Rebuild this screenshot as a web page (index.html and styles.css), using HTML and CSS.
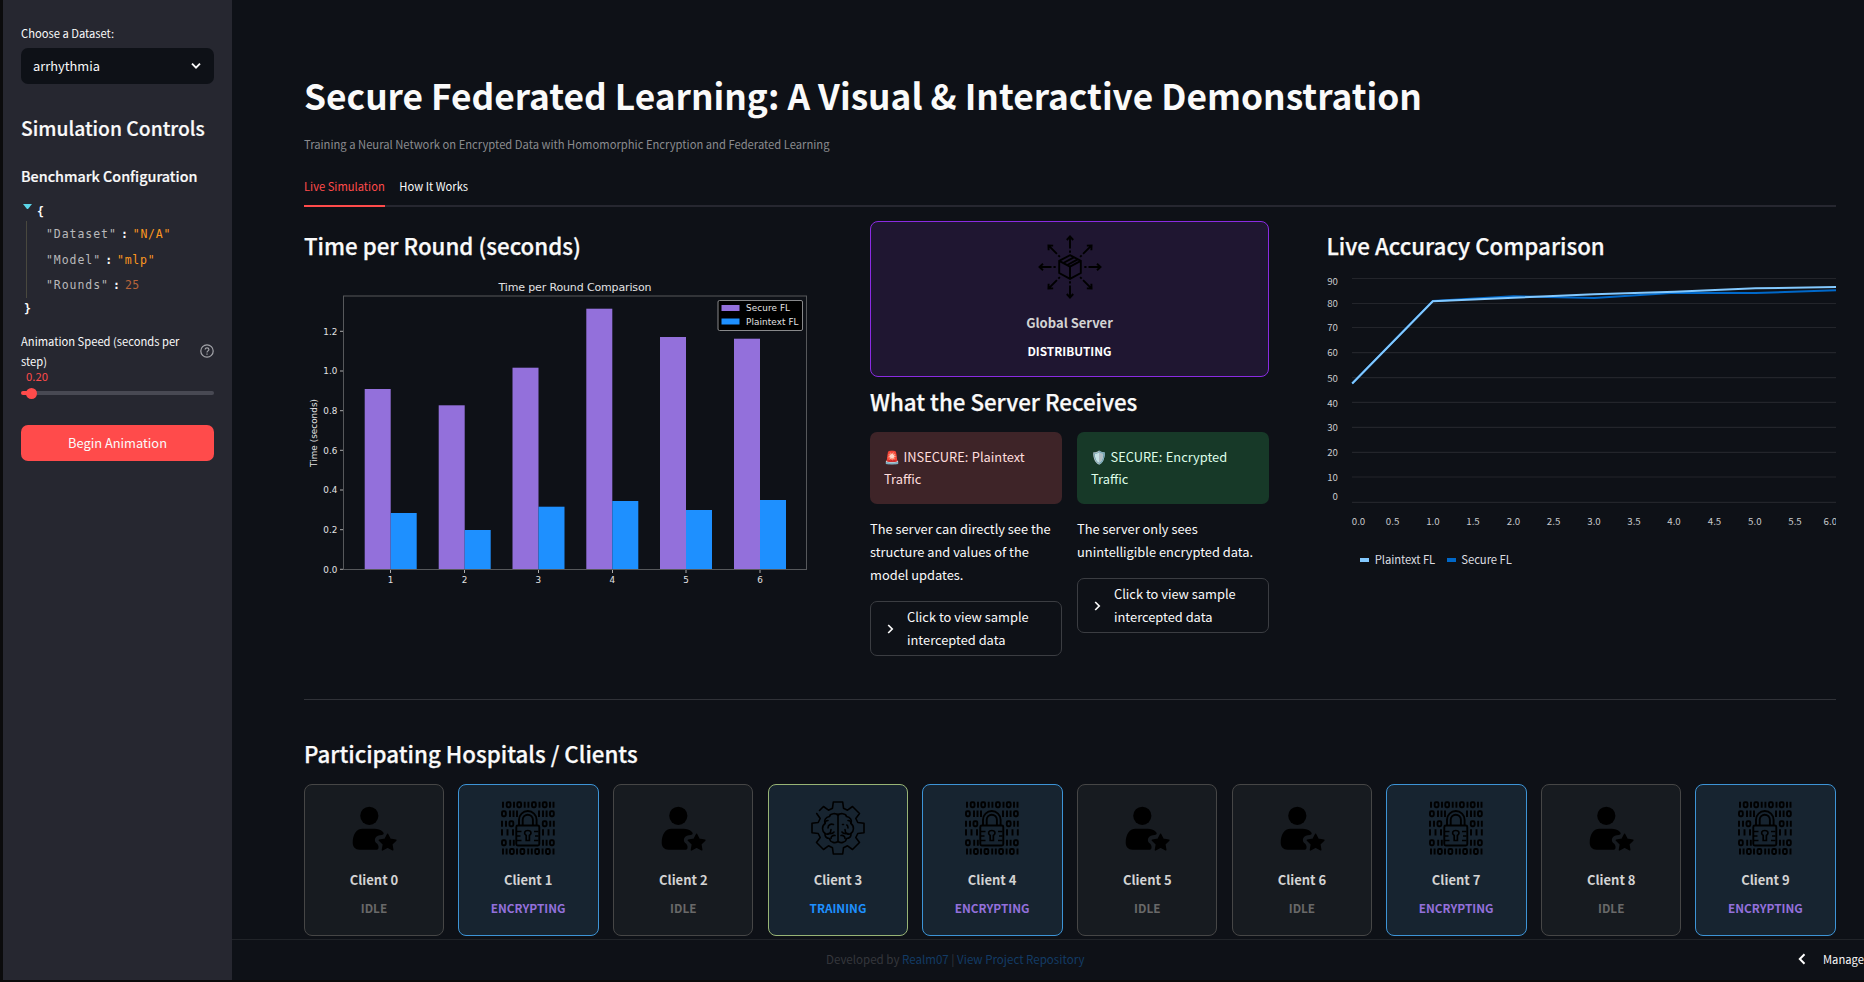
FILE: index.html
```html
<!DOCTYPE html>
<html lang="en">
<head>
<meta charset="utf-8">
<title>Secure Federated Learning</title>
<link rel="stylesheet" href="styles.css">
</head>
<body>
<svg class="defs" width="0" height="0">
  <symbol id="user" viewBox="0 0 54 54">
    <circle cx="22.3" cy="14.8" r="9.1"/>
    <path d="M15.5 27.8h12c3.500 0 6 .8 8 2.600 2 1.700 1.300 3.200-.6 3.500-2.800.4-5.700.8-6.700 3.300-1 2.600.2 4 2 5.600 1.400 1.400 1.700 3.300 1 5.200-.3.600-.9.800-1.500.8H12.500c-4.200 0-6.800-3-6.800-7 0-8 3.500-14 9.800-14z"/>
    <path stroke="#000" stroke-width="1.400" stroke-linejoin="round" d="M40.600 33.200l2.600 5.100 5.700.9-4.100 4 1 5.700-5.200-2.700-5.200 2.700 1-5.700-4.100-4 5.700-.9z"/>
  </symbol>
  <symbol id="lock" viewBox="0 0 54 54">
    <g fill="none" stroke="#000" stroke-width="1.900">
      <path d="M2 .7v6M13 .7v6M23.700 .7v6M27.400 .7v6M38.500 .7v6M49 .7v6M52.500 .7v6M9 9.500v6.500M12.500 9.500v6.500M16 9.500v6.500M38 9.500v6.500M42 9.500v6.500M45.600 9.500v6.500M1 19.700v6M5 19.700v6M49.200 19.700v6M52.800 19.700v6M1 28.200v6.300M6.500 28.200v6.300M12 28.200v6.300M42 28.200v6.300M47.500 28.200v6.300M52.800 28.200v6.300M9.200 38.700v6M12.800 38.700v6M42 38.700v6M45.600 38.700v6M2 47.500v6M5.600 47.500v6M16 47.500v6M27.200 47.500v6M30.800 47.500v6M41.600 47.500v6M52.500 47.500v6"/>
      <g>
        <rect x="5.700" y="1.300" width="3.800" height="5" rx="1.200"/><rect x="16.300" y="1.300" width="3.800" height="5" rx="1.200"/><rect x="31" y="1.300" width="3.800" height="5" rx="1.200"/><rect x="41.800" y="1.300" width="3.800" height="5" rx="1.200"/>
        <rect x="1" y="10.200" width="3.800" height="5" rx="1.200"/><rect x="49" y="10.200" width="3.800" height="5" rx="1.200"/>
        <rect x="8.500" y="20.200" width="3.800" height="5" rx="1.200"/><rect x="41.800" y="20.200" width="3.800" height="5" rx="1.200"/>
        <rect x="1" y="39.200" width="3.800" height="5" rx="1.200"/><rect x="49" y="39.200" width="3.800" height="5" rx="1.200"/>
        <rect x="9" y="48" width="3.800" height="5" rx="1.200"/><rect x="19.500" y="48" width="3.800" height="5" rx="1.200"/><rect x="34.200" y="48" width="3.800" height="5" rx="1.200"/><rect x="45" y="48" width="3.800" height="5" rx="1.200"/>
      </g>
      <rect x="15.300" y="24.500" width="23" height="20" rx="1.500"/>
      <path d="M18 24v-5.200a8.800 8.800 0 0 1 17.600 0V24M21.700 24v-5.200a5.100 5.100 0 0 1 10.200 0V24"/>
      <path stroke-width="1.500" d="M16 30.500h4.500M16 35h3.500M16 39.500h4.500M37.500 30.500H33M37.500 35H34M37.500 39.500H33"/>
      <path stroke-width="1.700" d="M25.200 34.500c-3-2.300-1.500-5 1.600-5s4.600 2.700 1.600 5v5h-3.200z"/>
    </g>
  </symbol>
  <symbol id="brain" viewBox="0 0 54 54">
    <g fill="none" stroke="#000" stroke-width="1.600" stroke-linejoin="round" stroke-linecap="round">
      <path d="M8.500 9.500L12.500 5.500 17.500 9.200 21.500 7.200 22.300 1H31.700L32.500 7.200 36.500 9.200 41.500 5.500 48.500 12.500 44.800 17.500 46.800 21.500 53 22.300V31.700L46.800 32.500 44.800 36.500 48.500 41.500 41.500 48.500 36.500 44.800 32.500 46.800 31.700 53H22.300L21.500 46.800 17.500 44.800 12.500 48.500 5.500 41.500 9.200 36.500 7.200 32.500 1 31.700V22.300L7.200 21.500 9.200 17.500 5.700 12.500"/>
      <path d="M27 13v28M27 14.500c-2-3-8-2-8.500 1-4 .5-5.800 4-4.500 7-3.500 2.500-3 8 0 10-.3 3 1.500 5 4.500 5 .5 4 6.500 5.500 8.500 2.500M27 14.500c2-3 8-2 8.500 1 4 .5 5.800 4 4.500 7 3.500 2.500 3 8 0 10 .3 3-1.500 5-4.500 5-.5 4-6.500 5.500-8.500 2.500"/>
      <path d="M14 22.500c0-2 1-3 3-3M17 27c0-3 2.500-4.500 5.500-3.500M14 32.500c2.500 1.500 6 .5 6-4M17 32.500c3 .5 5 .2 6-1.500M20 37.500c0-2 1.500-3.500 4-3M40 22.500c0-2-1-3-3-3M37 27c0-2-.7-2.700-1.200-3M31.500 23.500h1M40 32.500c-2.500 1.500-6 .5-6-4M37 32.500c-3 .5-5 .2-6-1.500M34 37.500c0-2-1.500-3.500-4-3"/>
    </g>
  </symbol>
</svg>

<aside class="sidebar">
  <label class="label">Choose a Dataset:</label>
  <div class="select"><span>arrhythmia</span>
    <svg width="12" height="8" viewBox="0 0 12 8"><path d="M2 1.600l4 4 4-4" fill="none" stroke="#fafafa" stroke-width="1.900"/></svg>
  </div>
  <h2 class="side-title">Simulation Controls</h2>
  <h3 class="side-sub">Benchmark Configuration</h3>
  <div class="json">
    <div class="json-open"><i class="tri"></i><b>{</b></div>
    <div class="json-body">
      <div><span class="key">"Dataset"</span><b>:</b><span class="str">"N/A"</span></div>
      <div><span class="key">"Model"</span><b>:</b><span class="str">"mlp"</span></div>
      <div><span class="key">"Rounds"</span><b>:</b><span class="num">25</span></div>
    </div>
    <div class="json-close"><b>}</b></div>
  </div>
  <div class="speed"><span class="label">Animation Speed (seconds per step)</span>
    <svg width="14" height="14" viewBox="0 0 14 14" fill="none" stroke="#a3a4a9" stroke-width="1.200"><circle cx="7" cy="7" r="6.200"/><path d="M5.100 5.500c.1-2.300 3.800-2.300 3.800 0 0 1.400-1.900 1.400-1.900 2.900M7 9.400v1.300"/></svg>
  </div>
  <div class="value">0.20</div>
  <div class="track"><i class="thumb"></i></div>
  <button class="begin">Begin Animation</button>
</aside>

<div class="page">
<main class="main">
  <h1>Secure Federated Learning: A Visual &amp; Interactive Demonstration</h1>
  <p class="caption">Training a Neural Network on Encrypted Data with Homomorphic Encryption and Federated Learning</p>
  <nav class="tabs"><a class="tab active">Live Simulation</a><a class="tab">How It Works</a></nav>

  <section class="columns">
    <div class="col-time">
      <h2 class="heading">Time per Round (seconds)</h2>
      <svg class="bars" width="512" height="330" viewBox="304 272 512 330">
        <text x="575" y="290.500" text-anchor="middle" font-size="11" textLength="153">Time per Round Comparison</text>
        <g fill="#9370db">
          <rect x="364.700" y="389" width="26" height="180.300"/><rect x="438.700" y="405.300" width="26" height="164"/><rect x="512.500" y="367.700" width="26" height="201.600"/><rect x="586.300" y="308.700" width="26" height="260.600"/><rect x="660" y="337" width="26" height="232.300"/><rect x="734" y="338.700" width="26" height="230.600"/>
        </g>
        <g fill="#1e90ff">
          <rect x="390.700" y="513" width="26" height="56.300"/><rect x="464.700" y="530" width="26" height="39.300"/><rect x="538.500" y="506.700" width="26" height="62.600"/><rect x="612.300" y="501" width="26" height="68.300"/><rect x="686" y="510" width="26" height="59.300"/><rect x="760" y="500" width="26" height="69.300"/>
        </g>
        <rect x="343.500" y="296" width="463" height="273.500" fill="none" stroke="#56585b"/>
        <path stroke="#aaa" d="M340 331.300h3M340 371h3M340 410.700h3M340 450.300h3M340 490h3M340 529.700h3M340 569.300h3M390.500 570v3M464.500 570v3M538.500 570v3M612.500 570v3M686 570v3M760 570v3"/>
        <g font-size="8.800" text-anchor="end">
          <text x="337.300" y="334.700">1.2</text><text x="337.300" y="374.400">1.0</text><text x="337.300" y="414">0.8</text><text x="337.300" y="453.700">0.6</text><text x="337.300" y="493.400">0.4</text><text x="337.300" y="533">0.2</text><text x="337.300" y="572.700">0.0</text>
        </g>
        <g font-size="8.800" text-anchor="middle">
          <text x="390.500" y="583">1</text><text x="464.500" y="583">2</text><text x="538.300" y="583">3</text><text x="612.200" y="583">4</text><text x="686" y="583">5</text><text x="760" y="583">6</text>
        </g>
        <text transform="translate(317 433) rotate(-90)" text-anchor="middle" font-size="8.800" textLength="68">Time (seconds)</text>
        <rect x="718" y="300.500" width="84.500" height="30" rx="1.500" fill="#000" stroke="#88898b"/>
        <rect x="721.500" y="305" width="18" height="6" fill="#9370db"/><rect x="721.500" y="318.500" width="18" height="6" fill="#1e90ff"/>
        <text x="746" y="311.300" font-size="8.800" textLength="44">Secure FL</text><text x="746" y="325" font-size="8.800" textLength="52.500">Plaintext FL</text>
      </svg>
    </div>

    <div class="col-server">
      <div class="server">
        <svg width="64" height="64" viewBox="0 0 64 64" fill="none" stroke="#000" stroke-width="1.900">
          <path d="M32 20.200l10.800 5.600V38L32 43.800 21.200 38V25.800zM21.200 25.800L32 31.600l10.800-5.800M32 31.600v12.200M25.300 28l10.600-5.700M29.300 30l10.500-5.700"/>
          <g id="ray"><path d="M32 13.500V1.500M28.800 5L32 1.500 35.200 5M32 15.500v2.200"/></g>
          <use href="#ray" transform="rotate(45 32 32)"/><use href="#ray" transform="rotate(90 32 32)"/><use href="#ray" transform="rotate(135 32 32)"/><use href="#ray" transform="rotate(180 32 32)"/><use href="#ray" transform="rotate(225 32 32)"/><use href="#ray" transform="rotate(270 32 32)"/><use href="#ray" transform="rotate(315 32 32)"/>
        </svg>
        <div class="name">Global Server</div>
        <div class="status white">DISTRIBUTING</div>
      </div>
      <h2 class="heading receives">What the Server Receives</h2>
      <div class="traffic">
        <div>
          <div class="alert red">🚨 INSECURE: Plaintext Traffic</div>
          <p class="text">The server can directly see the structure and values of the model updates.</p>
          <div class="expander"><svg width="7" height="10" viewBox="0 0 7 10"><path d="M1.200 1l4 4-4 4" fill="none" stroke="#fafafa" stroke-width="1.700"/></svg><span>Click to view sample intercepted data</span></div>
        </div>
        <div>
          <div class="alert green">🛡️ SECURE: Encrypted Traffic</div>
          <p class="text">The server only sees unintelligible encrypted data.</p>
          <div class="expander"><svg width="7" height="10" viewBox="0 0 7 10"><path d="M1.200 1l4 4-4 4" fill="none" stroke="#fafafa" stroke-width="1.700"/></svg><span>Click to view sample intercepted data</span></div>
        </div>
      </div>
    </div>

    <div class="col-acc">
      <h2 class="heading">Live Accuracy Comparison</h2>
      <svg class="lines" width="509" height="330" viewBox="1327 272 509 330">
        <path stroke="#23252b" stroke-width="1.200" d="M1352 278.500h484M1352 303.500h484M1352 327.500h484M1352 352.700h484M1352 377.700h484M1352 402.300h484M1352 427.300h484M1352 452.300h484M1352 477h484M1352 502.300h484"/>
        <path fill="none" stroke="#0068c9" stroke-width="2" d="M1352.200 383.500L1432.800 301 1513.500 296.300 1594 298 1674.800 292.800 1755.500 293 1836 290.300"/>
        <path fill="none" stroke="#83c9ff" stroke-width="2" d="M1352.200 383.500L1432.800 301.300 1513.500 297.800 1594 294.200 1674.800 291.800 1755.500 288.300 1836 287"/>
        <g text-anchor="end">
          <text x="1338" y="285.200">90</text><text x="1338" y="307.200">80</text><text x="1338" y="331.200">70</text><text x="1338" y="356.200">60</text><text x="1338" y="381.500">50</text><text x="1338" y="406.500">40</text><text x="1338" y="430.800">30</text><text x="1338" y="455.800">20</text><text x="1338" y="480.800">10</text><text x="1338" y="500">0</text>
        </g>
        <g text-anchor="middle">
          <text x="1358.500" y="525">0.0</text><text x="1392.600" y="525">0.5</text><text x="1432.900" y="525">1.0</text><text x="1473" y="525">1.5</text><text x="1513.500" y="525">2.0</text><text x="1553.600" y="525">2.5</text><text x="1594" y="525">3.0</text><text x="1634" y="525">3.5</text><text x="1674" y="525">4.0</text><text x="1714.500" y="525">4.5</text><text x="1754.800" y="525">5.0</text><text x="1795" y="525">5.5</text><text x="1830.300" y="525">6.0</text>
        </g>
        <rect x="1360" y="558" width="9" height="4" fill="#83c9ff"/><rect x="1447" y="558" width="9" height="4" fill="#0068c9"/>
        <text class="leg" x="1374.700" y="564.200" textLength="60.500">Plaintext FL</text><text class="leg" x="1461.300" y="564.200" textLength="50.500">Secure FL</text>
      </svg>
    </div>
  </section>

  <hr>
  <h2 class="heading clients-title">Participating Hospitals / Clients</h2>
  <section class="clients">
    <div class="card"><svg><use href="#user"/></svg><div class="name">Client 0</div><div class="status">IDLE</div></div>
    <div class="card enc"><svg><use href="#lock"/></svg><div class="name">Client 1</div><div class="status">ENCRYPTING</div></div>
    <div class="card"><svg><use href="#user"/></svg><div class="name">Client 2</div><div class="status">IDLE</div></div>
    <div class="card train"><svg><use href="#brain"/></svg><div class="name">Client 3</div><div class="status">TRAINING</div></div>
    <div class="card enc"><svg><use href="#lock"/></svg><div class="name">Client 4</div><div class="status">ENCRYPTING</div></div>
    <div class="card"><svg><use href="#user"/></svg><div class="name">Client 5</div><div class="status">IDLE</div></div>
    <div class="card"><svg><use href="#user"/></svg><div class="name">Client 6</div><div class="status">IDLE</div></div>
    <div class="card enc"><svg><use href="#lock"/></svg><div class="name">Client 7</div><div class="status">ENCRYPTING</div></div>
    <div class="card"><svg><use href="#user"/></svg><div class="name">Client 8</div><div class="status">IDLE</div></div>
    <div class="card enc"><svg><use href="#lock"/></svg><div class="name">Client 9</div><div class="status">ENCRYPTING</div></div>
  </section>
</main>
<footer class="footer">
  <div class="credit">Developed by <a>Realm07</a> | <a>View Project Repository</a></div>
  <div class="manage"><svg width="8" height="12" viewBox="0 0 8 12"><path d="M6.500 1.200L1.800 6l4.700 4.800" fill="none" stroke="#fff" stroke-width="2"/></svg><span>Manage</span></div>
</footer>
</div>
</body>
</html>
```
FILE: styles.css
```css
* { box-sizing: border-box; }
body {
  margin: 0; width: 1864px; height: 982px; overflow: hidden;
  display: flex; padding: 0 0 2px 3px;
  background: #0b0b0c; color: #fafafa;
  font: 12.850px/23px "Noto Sans CJK SC", "Source Sans Pro", sans-serif;
}
h1, h2, h3, p { margin: 0; white-space: nowrap; }
.defs { position: absolute; }

.sidebar { width: 229px; flex: none; background: #262730; padding: 23px 18px 0; }
.label { display: block; font-size: 11.200px; line-height: 20px; }
.select {
  margin-top: 5px; height: 36px; border-radius: 7px; background: #0e1117;
  display: flex; align-items: center; justify-content: space-between;
  padding: 0 12px 1px;
}
.side-title { margin-top: 28px; font-size: 19.300px; line-height: 32px; font-weight: 500; -webkit-text-stroke: .2px; }
.side-sub { margin-top: 20px; font-size: 14.350px; line-height: 24px; font-weight: 500; -webkit-text-stroke: .2px; }
.json { margin-top: 13px; font: 11.500px/22px "DejaVu Sans Mono", monospace; letter-spacing: .95px; }
.json-open { display: flex; height: 20px; padding-left: 2px; }
.tri { margin-top: 3px; width: 9px; height: 5px; border: 4.500px solid transparent; border-top: 5px solid #5bd5e8; border-bottom: 0; }
.json-open b { margin-left: 5px; }
.json-body { margin-left: 5px; height: 77px; border-left: 1px solid #49483e; padding: 1px 0 0 19px; display: flex; flex-direction: column; justify-content: space-between; }
.json-body div { display: flex; line-height: 25px; }
.json-body b { margin: 0 4px; }
.key { color: #b9b9bb; }
.str { color: #fd971f; letter-spacing: .75px; }
.num { color: #b7633a; letter-spacing: .4px; }
.json-close { padding-left: 3px; line-height: 22px; height: 24px; }
.speed { margin-top: 9px; display: flex; align-items: center; justify-content: space-between; }
.speed .label { width: 170px; }
.speed svg { flex: none; }
.value { margin: -2px 0 0 5px; height: 19px; font-size: 11.300px; line-height: 14px; color: #ff4b4b; }
.track { height: 4px; margin-top: 3px; border-radius: 2px; background: linear-gradient(90deg, #ff4b4b 10px, #484953 10px); display: flex; align-items: center; }
.thumb { width: 11px; height: 11px; border-radius: 50%; background: #ff4b4b; margin-left: 5px; flex: none; }
.begin {
  display: block; margin: 30px 0 0; width: 193px; height: 36px; padding: 0 0 1px; border: 0; border-radius: 7px;
  background: #ff4b4b; color: #fafafa; font: inherit;
}

.page { flex: 1; min-width: 0; background: #0e1117; display: flex; flex-direction: column; }
.main { height: 939px; flex: none; padding: 67px 28px 0 72px; }
h1 { font-size: 35.300px; line-height: 56px; font-weight: 700; }
.caption { margin-top: 11px; font-size: 11.220px; line-height: 20px; color: #8b8c8f; }
.tabs { margin-top: 16px; height: 37px; display: flex; gap: 14.600px; box-shadow: inset 0 -2px #262730; font-size: 11.200px; line-height: 33px; }
.tab { height: 37px; white-space: nowrap; }
.active { color: #ff4b4b; border-bottom: 2px solid #ff4b4b; }
.columns { display: grid; grid-template-columns: 566px 399px 509px; column-gap: 0; justify-content: start; margin-top: 14px; height: 478px; }
.col-acc { margin-left: 58px; width: 509px; }
.heading { font-size: 22.300px; line-height: 32px; font-weight: 500; -webkit-text-stroke: .25px; }
.col-time .heading, .col-acc .heading { padding-top: 8px; height: 51px; }
.col-acc .heading { text-indent: -.6px; }
.bars, .lines { display: block; }
.bars text { font-family: "DejaVu Sans", sans-serif; fill: #e2e2e4; }
.lines text { font-size: 9.700px; fill: #c9cacd; }
.lines .leg { font-size: 11.300px; fill: #dcdde0; }

.server { height: 156px; border: 1px solid #8a2be2; border-radius: 8px; background: #1f1631; padding-top: 13px; text-align: center; }
.server svg { display: block; margin: 0 auto 13px; }
.name { font-size: 13px; line-height: 22px; font-weight: 700; color: #d3d3d3; }
.status { margin-top: 7px; font-size: 11.800px; line-height: 20px; font-weight: 700; color: #696969; }
.white { color: #fff; }
.receives { margin-top: 8px; }
.traffic { margin-top: 15px; display: grid; grid-template-columns: 192px 192px; gap: 15px; }
.alert { height: 72px; border-radius: 7px; padding: 14px 14px 0; line-height: 22px; }
.alert::first-line { word-spacing: .6px; }
.red { background: #3e2428; color: #ffdede; }
.green { background: #173928; color: #dffde9; }
.text { margin-top: 13px; white-space: normal; }
.expander { margin-top: 15px; height: 55px; border: 1px solid #3b3d42; border-radius: 7px; display: flex; align-items: center; gap: 13px; padding: 0 14px 0 16px; }
.expander svg { flex: none; }
.expander span { padding-bottom: 2px; }
hr { border: 0; margin: 0; height: 1px; background: #303238; }
.clients-title { margin-top: 37px; }
.clients { margin-top: 15px; display: grid; grid-template-columns: repeat(10, 140px); justify-content: space-between; }
.card { height: 152px; border: 1px solid #464646; border-radius: 8px; background: #171b20; padding-top: 16px; text-align: center; }
.card svg { display: block; width: 54px; height: 54px; margin: 0 auto 14px; }
.enc { margin-left: -1px; background: #172430; border-color: #3d94d6; }
.enc .status { color: #9370db; }
.train { background: #172430; border-color: #98b475; }
.train .status { color: #1e90ff; }
.footer { flex: 1; border-top: 1px solid #212429; display: flex; align-items: center; padding-bottom: 2px; }
.credit { margin-left: 594px; width: 972px; flex: none; font-size: 11.560px; color: #35373c; white-space: nowrap; }
.credit a { color: #133c66; }
.manage { display: flex; align-items: center; gap: 17px; white-space: nowrap; font-size: 11.200px; }
.manage svg { flex: none; }
```
